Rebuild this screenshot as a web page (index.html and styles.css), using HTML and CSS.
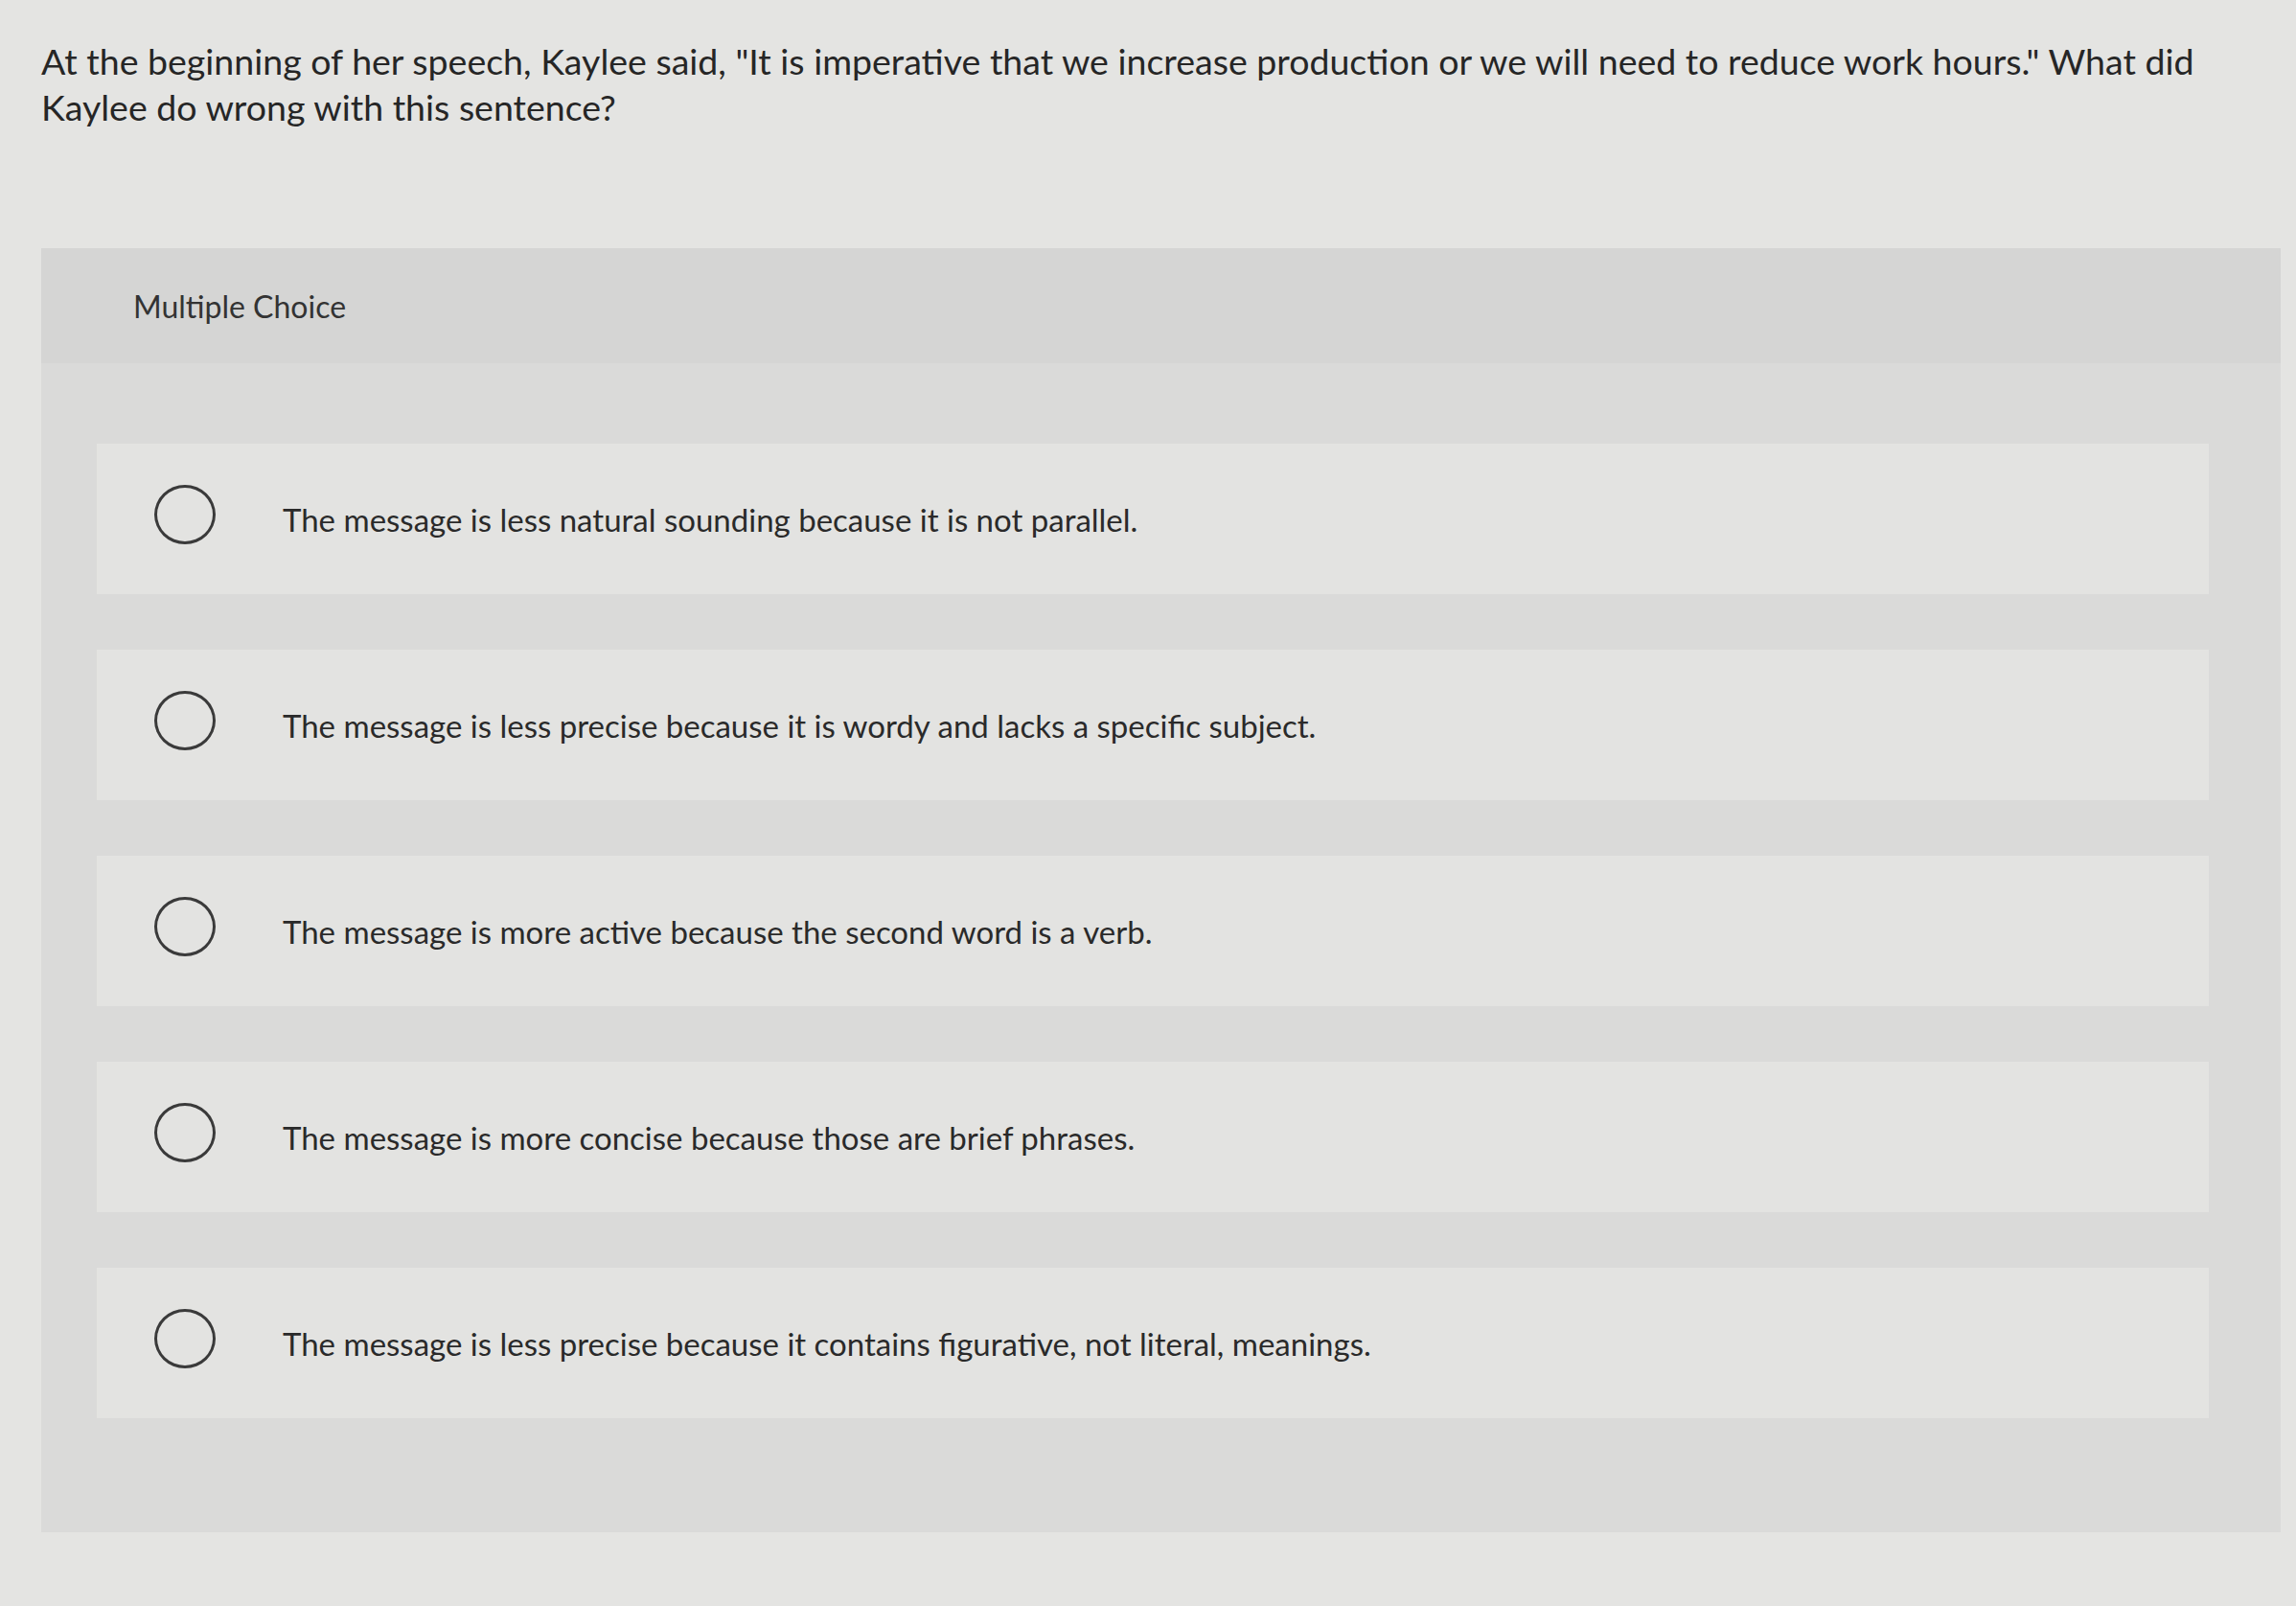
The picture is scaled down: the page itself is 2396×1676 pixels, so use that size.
FILE: index.html
```html
<!DOCTYPE html>
<html lang="en">
<head>
<meta charset="utf-8">
<title>Multiple Choice</title>
<link rel="stylesheet" href="styles.css">
</head>
<body>
<div class="page">
  <p class="question">At the beginning of her speech, Kaylee said, "It is imperative that we increase production or we will need to reduce work hours." What did Kaylee do wrong with this sentence?</p>
  <section class="panel">
    <header class="panel-head">Multiple Choice</header>
    <div class="options">
      <label class="option"><span class="radio"></span><span class="opt-text">The message is less natural sounding because it is not parallel.</span></label>
      <label class="option"><span class="radio"></span><span class="opt-text">The message is less precise because it is wordy and lacks a specific subject.</span></label>
      <label class="option"><span class="radio"></span><span class="opt-text">The message is more active because the second word is a verb.</span></label>
      <label class="option"><span class="radio"></span><span class="opt-text">The message is more concise because those are brief phrases.</span></label>
      <label class="option"><span class="radio"></span><span class="opt-text">The message is less precise because it contains figurative, not literal, meanings.</span></label>
    </div>
  </section>
</div>
</body>
</html>
```

FILE: styles.css
```css
html, body {
  margin: 0;
  padding: 0;
}
body {
  background: #e4e4e2;
  font-family: Lato, "Open Sans", "Liberation Sans", sans-serif;
  color: #2b2b2b;
  width: 2396px;
  height: 1676px;
  overflow: hidden;
}
.page {
  padding: 40px 16px 0 43px;
}
.question {
  margin: 0;
  width: 2300px;
  font-size: 37.5px;
  line-height: 48px;
  color: #262626;
}
.panel {
  margin-top: 123px;
  background: #dadad9;
  height: 1340px;
  display: flex;
  flex-direction: column;
}
.panel-head {
  height: 120px;
  background: #d5d5d4;
  display: flex;
  align-items: center;
  padding-left: 96px;
  font-size: 32px;
  color: #333;
}
.options {
  padding: 84px 75px 0 58px;
  display: flex;
  flex-direction: column;
  gap: 58px;
}
.option {
  height: 157px;
  background: #e3e3e1;
  display: flex;
  align-items: center;
  padding-left: 60px;
}
.radio {
  width: 64px;
  height: 62px;
  border: 3px solid #3a3a3a;
  border-radius: 50%;
  box-sizing: border-box;
  flex: none;
  margin-right: 70px;
  margin-top: -10px;
}
.opt-text {
  font-size: 33px;
  color: #2a2a2a;
}
```
